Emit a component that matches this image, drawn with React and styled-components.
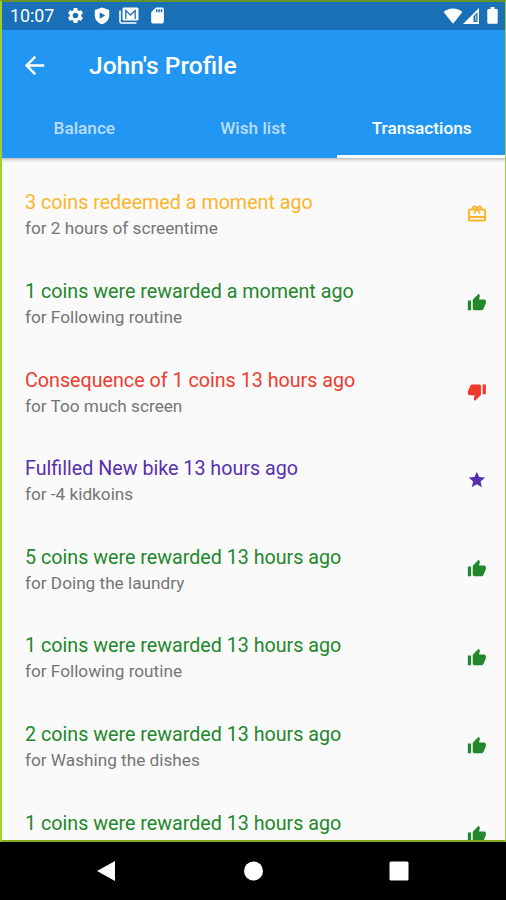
import React, { useState } from "react";
import styled, { createGlobalStyle } from "styled-components";
import {
  MdArrowBack,
  MdSdCard,
  MdSettings,
  MdStar,
  MdThumbDown,
  MdThumbUp,
} from "react-icons/md";

const GlobalStyle = createGlobalStyle`
  body {
    margin: 0;
    background: #000;
    font-family: Roboto, "Liberation Sans", sans-serif;
  }
`;

const Phone = styled.div`
  display: flex;
  flex-direction: column;
  width: 506px;
  height: 900px;
  overflow: hidden;
`;

const Screen = styled.div`
  position: relative;
  display: flex;
  flex-direction: column;
  height: 842px;
  box-sizing: border-box;
  overflow: hidden;
  background: #fafafa;

  /* thin green frame over the app */
  &::after {
    content: "";
    position: absolute;
    inset: 0;
    border: 2px solid #a3cf2b;
    border-top-color: #64932a;
    border-bottom-color: #87ab1d;
    border-right-width: 1px;
    pointer-events: none;
  }
`;

const Header = styled.header`
  flex: none;
  height: 158px;
  background: #2196f3;
  color: white;
  box-shadow: 0 1px 4px rgba(0, 0, 0, 0.35);
`;

const StatusBar = styled.div`
  display: flex;
  align-items: center;
  justify-content: space-between;
  height: 30px;
  padding: 1px 8px 0 10px;
  box-sizing: border-box;
  background: #1a70b7;
`;

const StatusGroup = styled.div`
  display: flex;
  align-items: center;
  gap: ${(props) => props.$gap};
`;

const Clock = styled.span`
  width: 47px;
  font-size: 17.8px;
  line-height: 30px;
`;

const Battery = styled.svg`
  margin-left: 8px;
`;

const TitleBar = styled.div`
  display: flex;
  align-items: center;
  height: 70px;
  padding-left: 20px;
`;

const Title = styled.h1`
  margin: 0 0 0 40px;
  font-size: 24.6px;
  font-weight: 500;
`;

const Tabs = styled.nav`
  display: grid;
  grid-template-columns: repeat(3, 1fr);
  height: 58px;
`;

const Tab = styled.button`
  padding: 0;
  border: none;
  border-bottom: 3px solid ${(props) => (props.$active ? "#f8fcff" : "transparent")};
  background: none;
  color: ${(props) => (props.$active ? "white" : "rgba(255, 255, 255, 0.7)")};
  font-family: inherit;
  font-size: 17.2px;
  font-weight: 500;
  cursor: pointer;
`;

const List = styled.ul`
  margin: 0;
  padding: 12.2px 0 0;
  list-style: none;
`;

const Row = styled.li`
  display: flex;
  align-items: center;
  justify-content: space-between;
  height: 88.6px;
  padding: 0 19px 0 25px;
  box-sizing: border-box;
  color: ${(props) => props.$color};
`;

const RowText = styled.div`
  padding-top: 3px;
`;

const RowTitle = styled.div`
  font-size: 19.7px;
  line-height: 26px;
`;

const RowSubtitle = styled.div`
  font-size: 17.2px;
  line-height: 25px;
  color: #757575;
`;

const NavBar = styled.footer`
  display: grid;
  grid-template-columns: repeat(3, 146px);
  justify-content: center;
  align-items: center;
  justify-items: center;
  height: 58px;
  background: black;
`;

const GiftIcon = () => (
  <svg width="20" height="20" viewBox="0 0 20 20" fill="none" stroke="currentColor">
    <rect x="1.900" y="5.500" width="16.200" height="11" rx="1.500" strokeWidth="2" />
    <path d="M2 13H18" strokeWidth="2" />
    <path
      d="M9.800 5C9 2 6 1.500 5.800 3.700Q5.800 5 7 5.500M10.200 5C11 2 14 1.500 14.200 3.700Q14.200 5 13 5.500"
      strokeWidth="1.700"
    />
    <path d="M9.800 5.500 7 9.500M10.200 5.500 13 9.500" strokeWidth="1.700" />
  </svg>
);

const ShieldIcon = () => (
  <svg width="16" height="18" viewBox="0 0 16 18">
    <path
      fill="white"
      fillRule="evenodd"
      d="M8 0.5 15.2 3v5.5c0 4.2-3 7.4-7.2 8.8C3.800 15.900.8 12.700.8 8.500V3zM5.700 5.200v6.600L11.300 8.500z"
    />
  </svg>
);

const MailIcon = () => (
  <svg width="20" height="17" viewBox="0 0 20 17">
    <path d="M1 3.500V14.500Q1 16 2.500 16H17.500" fill="none" stroke="white" strokeWidth="1.600" />
    <rect x="3.500" y="0.500" width="16" height="13" rx="1.500" fill="white" />
    <path d="M6.800 12V3.500L11.500 8L16.200 3.500V12" fill="none" stroke="#1a70b7" strokeWidth="1.300" />
  </svg>
);

const WifiIcon = () => (
  <svg width="20" height="16" viewBox="0 0 20 16">
    <path d="M10 15.700.6 4C3 1.700 6.300.5 10 .5S17 1.700 19.400 4z" fill="white" />
  </svg>
);

const SignalIcon = () => (
  <svg width="16" height="16" viewBox="0 0 16 16">
    <path d="M16 0V16H0z" fill="white" />
    <path d="M10.500 8 14.500 4V14H10.500z" fill="#1a70b7" />
    <path d="M12 7h1.400v6H12z" fill="#8fbce0" />
  </svg>
);

const BatteryIcon = () => (
  <Battery width="11" height="17" viewBox="0 0 11 17">
    <path
      d="M3.500 0h4v2H9.500Q10.700 2 10.700 3.200V15.500Q10.700 16.700 9.500 16.700H1.500Q.3 16.700.3 15.500V3.200Q.3 2 1.500 2H3.500z"
      fill="white"
    />
  </Battery>
);

const kinds = {
  redeemed: { color: "#fbb52c", Icon: GiftIcon },
  reward: { color: "#23872b", Icon: MdThumbUp },
  consequence: { color: "#f03a2e", Icon: MdThumbDown },
  fulfilled: { color: "#5730b0", Icon: MdStar },
};

const transactions = [
  { kind: "redeemed", title: "3 coins redeemed a moment ago", reason: "2 hours of screentime" },
  { kind: "reward", title: "1 coins were rewarded a moment ago", reason: "Following routine" },
  { kind: "consequence", title: "Consequence of 1 coins 13 hours ago", reason: "Too much screen" },
  { kind: "fulfilled", title: "Fulfilled New bike 13 hours ago", reason: "-4 kidkoins" },
  { kind: "reward", title: "5 coins were rewarded 13 hours ago", reason: "Doing the laundry" },
  { kind: "reward", title: "1 coins were rewarded 13 hours ago", reason: "Following routine" },
  { kind: "reward", title: "2 coins were rewarded 13 hours ago", reason: "Washing the dishes" },
  { kind: "reward", title: "1 coins were rewarded 13 hours ago", reason: "" },
];

const Transaction = ({ kind, title, reason }) => {
  const { color, Icon } = kinds[kind];

  return (
    <Row $color={color}>
      <RowText>
        <RowTitle>{title}</RowTitle>
        <RowSubtitle>{reason ? `for ${reason}` : "\u00a0"}</RowSubtitle>
      </RowText>
      <Icon size={19.7} />
    </Row>
  );
};

const App = () => {
  const [active, setActive] = useState("Transactions");

  return (
    <Phone>
      <GlobalStyle />
      <Screen>
        <Header>
          <StatusBar>
            <StatusGroup $gap="9px">
              <Clock>10:07</Clock>
              <MdSettings size={19} />
              <ShieldIcon />
              <MailIcon />
              <MdSdCard size={19} />
            </StatusGroup>
            <StatusGroup $gap="0px">
              <WifiIcon />
              <SignalIcon />
              <BatteryIcon />
            </StatusGroup>
          </StatusBar>
          <TitleBar>
            <MdArrowBack size={29} />
            <Title>John's Profile</Title>
          </TitleBar>
          <Tabs>
            {["Balance", "Wish list", "Transactions"].map((name) => (
              <Tab key={name} $active={name === active} onClick={() => setActive(name)}>
                {name}
              </Tab>
            ))}
          </Tabs>
        </Header>
        <List>
          {transactions.map((item, index) => (
            <Transaction key={index} {...item} />
          ))}
        </List>
      </Screen>
      <NavBar>
        <svg width="22" height="22" viewBox="0 0 22 22">
          <path d="M19 1V21L1 11z" fill="white" />
        </svg>
        <svg width="20" height="20" viewBox="0 0 20 20">
          <circle cx="10.500" cy="10" r="9.500" fill="white" />
        </svg>
        <svg width="20" height="20" viewBox="0 0 20 20">
          <rect x="0.500" y="0.500" width="19" height="19" rx="1.500" fill="white" />
        </svg>
      </NavBar>
    </Phone>
  );
};

export default App;
